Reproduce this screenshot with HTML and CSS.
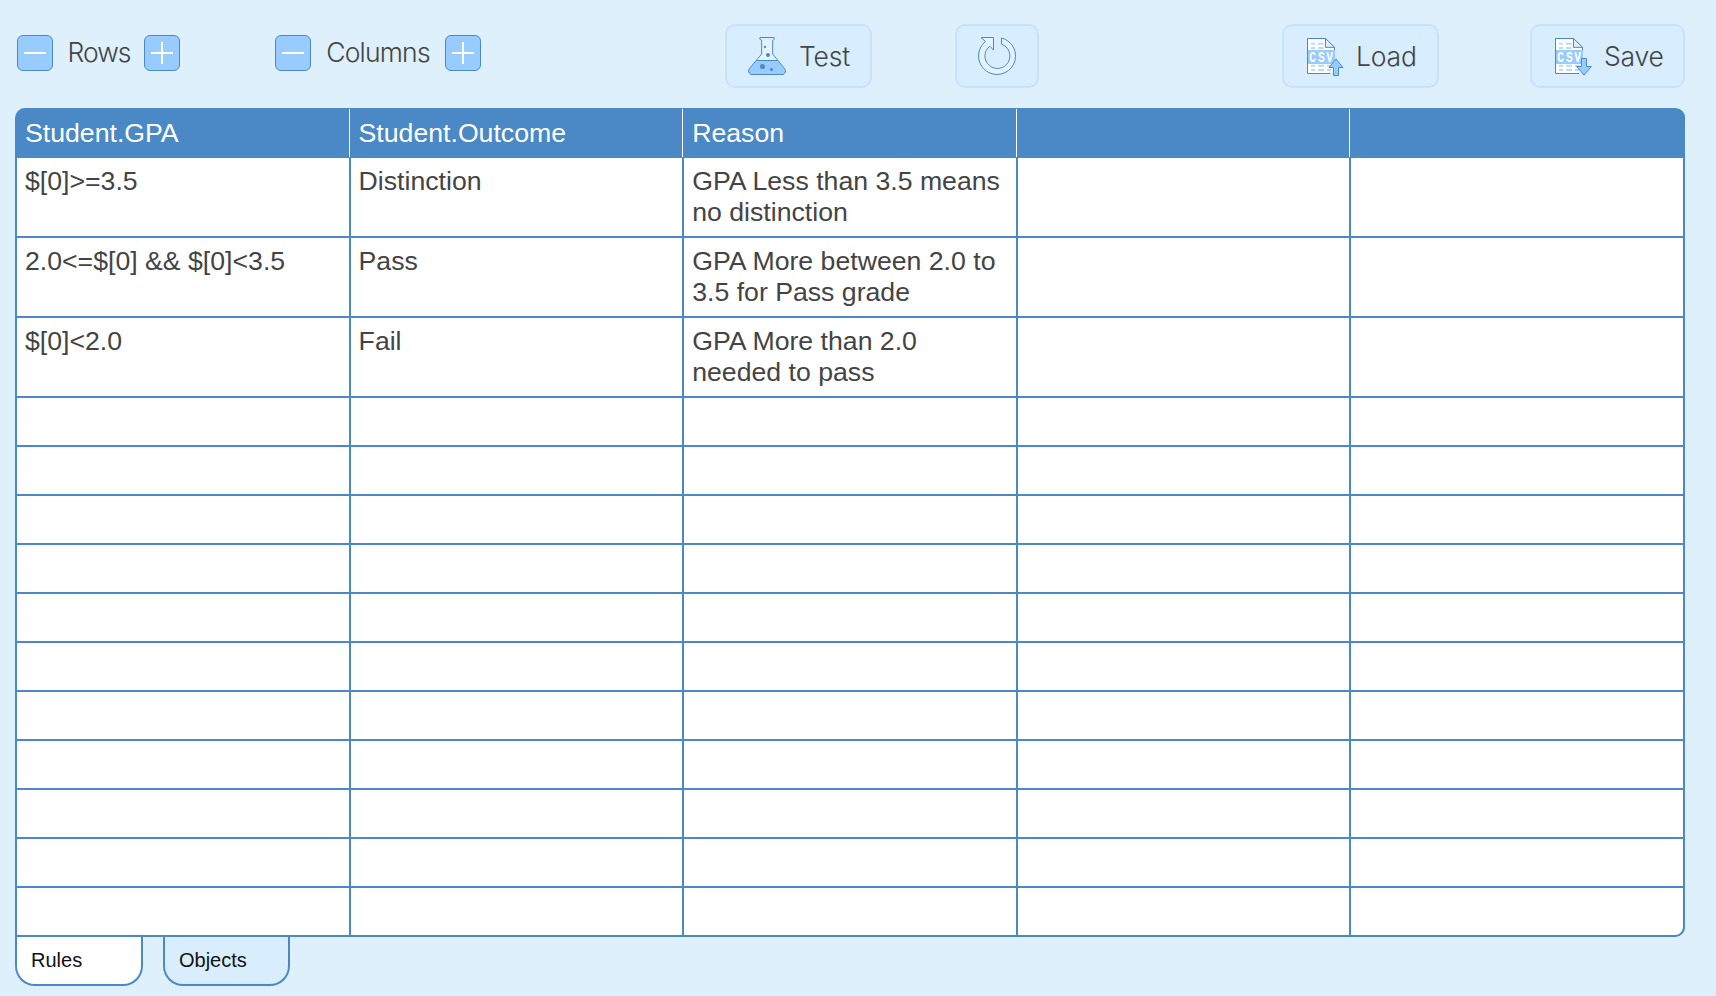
FILE: index.html
```html
<!DOCTYPE html>
<html lang="en">
<head>
<meta charset="utf-8">
<title>Decision Table</title>
<link rel="stylesheet" href="styles.css">
</head>
<body>
<svg class="defs" width="0" height="0">
  <defs>
    <g id="csv-doc">
      <path d="M112.500 85.500H166.500L193.500 112V190.500H112.500Z" fill="#fff" stroke="#4a89c6" stroke-width="3"/>
      <path d="M166.500 85.500V112H193.500Z" fill="#def0fc" stroke="#4a89c6" stroke-width="3"/>
      <path d="M123 101.500H135M144 101.500H161M123 114H135M144 114H161M123 167H135M144 167H162M171 167H184M123 180H135M144 180H162M171 180H184" stroke="#b9dbfb" stroke-width="6"/>
      <rect x="114" y="120" width="81" height="42" fill="#99ccfe"/>
      <text class="csv-text" transform="scale(.75 1)" x="157.300 192 225.300" y="156">CSV</text>
    </g>
  </defs>
</svg>
<main class="app">
  <div class="toolbar">
    <div class="stepper rows-stepper">
      <button class="step" aria-label="Remove row"><svg viewBox="0 0 36 36"><path d="M7 18H29"/></svg></button>
      <span class="label">Rows</span>
      <button class="step" aria-label="Add row"><svg viewBox="0 0 36 36"><path d="M7 18H29M18 7V29"/></svg></button>
    </div>
    <div class="stepper columns-stepper">
      <button class="step" aria-label="Remove column"><svg viewBox="0 0 36 36"><path d="M7 18H29"/></svg></button>
      <span class="label">Columns</span>
      <button class="step" aria-label="Add column"><svg viewBox="0 0 36 36"><path d="M7 18H29M18 7V29"/></svg></button>
    </div>
    <button class="action test">
      <svg class="icon" viewBox="111 78 120 120">
        <path d="M155 91V132L140 151H203L188 132V91Z" fill="#e4f3fe"/>
        <path d="M139 151H204L224 177Q230 186 221 193H121Q112 186 118 177Z" fill="#99ccfe"/>
        <path d="M150 82.500H192Q196 88 188 91.500V132L224 176Q231 187 219 193.500H123Q111 187 118 176L155 132V91.500Q146 88 150 82.500ZM139 151.500H203" class="outline"/>
        <g fill="#4a89c6"><circle cx="165" cy="111" r="3.500"/><circle cx="174" cy="135" r="6"/><circle cx="157.500" cy="169.500" r="7.500"/><circle cx="184.500" cy="178.500" r="4.800"/></g>
      </svg>
      <span class="label">Test</span>
    </button>
    <button class="action reset" aria-label="Reset">
      <svg class="icon" viewBox="111 78 120 120">
        <path d="M123 82.500H160.500V120L149 108.500A37.500 37.500 0 1 0 184.500 102.500V84A55.500 55.500 0 1 1 136.500 94.500Z" class="outline" fill="#e4f3fe"/>
      </svg>
    </button>
    <button class="action load">
      <svg class="icon" viewBox="102 78 120 120">
        <use href="#csv-doc"/>
        <path d="M181 187H190V201H181Z" fill="#d8eeff"/>
        <path d="M198 147L219 172.500H205.500V196.500H190.500V172.500H177Z" class="arrow"/>
      </svg>
      <span class="label">Load</span>
    </button>
    <button class="action save">
      <svg class="icon" viewBox="102 78 120 120">
        <use href="#csv-doc"/>
        <path d="M183 187H200V196H183Z" fill="#d8eeff"/>
        <path d="M198 195L220 169.500H205.500V145.500H190.500V169.500H176Z" class="arrow"/>
      </svg>
      <span class="label">Save</span>
    </button>
  </div>

  <div class="grid">
    <div class="row head"><div>Student.GPA</div><div>Student.Outcome</div><div>Reason</div><div></div><div></div></div>
    <div class="row tall"><div>$[0]&gt;=3.5</div><div>Distinction</div><div>GPA Less than 3.5 means no distinction</div><div></div><div></div></div>
    <div class="row tall"><div>2.0&lt;=$[0] &amp;&amp; $[0]&lt;3.5</div><div>Pass</div><div>GPA More between 2.0 to 3.5 for Pass grade</div><div></div><div></div></div>
    <div class="row tall"><div>$[0]&lt;2.0</div><div>Fail</div><div>GPA More than 2.0 needed to pass</div><div></div><div></div></div>
    <div class="row"><div></div><div></div><div></div><div></div><div></div></div>
    <div class="row"><div></div><div></div><div></div><div></div><div></div></div>
    <div class="row"><div></div><div></div><div></div><div></div><div></div></div>
    <div class="row"><div></div><div></div><div></div><div></div><div></div></div>
    <div class="row"><div></div><div></div><div></div><div></div><div></div></div>
    <div class="row"><div></div><div></div><div></div><div></div><div></div></div>
    <div class="row"><div></div><div></div><div></div><div></div><div></div></div>
    <div class="row"><div></div><div></div><div></div><div></div><div></div></div>
    <div class="row"><div></div><div></div><div></div><div></div><div></div></div>
    <div class="row"><div></div><div></div><div></div><div></div><div></div></div>
    <div class="row"><div></div><div></div><div></div><div></div><div></div></div>
  </div>

  <nav class="tabs">
    <a class="tab active">Rules</a>
    <a class="tab">Objects</a>
  </nav>
</main>
</body>
</html>
```
FILE: styles.css
```css
* { box-sizing: border-box; }

body {
  margin: 0;
  height: 996px;
  overflow: hidden;
  background: #def0fc;
  color: #444;
  font-family: "Liberation Sans", Arial, sans-serif;
}

button {
  padding: 0;
  font: inherit;
  color: inherit;
}

.defs { display: block; }

.app {
  width: 1670px;
  margin-left: 15px;
}

.toolbar {
  display: flex;
  align-items: flex-start;
  height: 108px;
  padding-top: 24px;
}

.stepper {
  display: flex;
  justify-content: space-between;
  align-items: center;
  height: 36px;
  margin-top: 11px;
}

.rows-stepper { width: 163px; margin-left: 2px; }
.columns-stepper { width: 206px; margin-left: 95px; }

.label {
  font: 300 26.5px/32px Inter, sans-serif;
  white-space: nowrap;
}

.stepper .label {
  padding-bottom: 2px;
  letter-spacing: -.8px;
}

.rows-stepper .label { padding-left: 1px; letter-spacing: -1px; }

.action .label { letter-spacing: -.2px; }

.step {
  width: 36px;
  height: 36px;
  border: 1px solid #4a89c6;
  border-radius: 6px;
  background: #99ccfe;
}

.step svg {
  display: block;
  width: 36px;
  height: 36px;
  margin: -1px;
  fill: none;
  stroke: #fff;
  stroke-width: 2;
}

.action {
  display: flex;
  align-items: center;
  gap: 12px;
  height: 64px;
  padding: 0 0 0 20px;
  border: 2px solid #c6e2ff;
  border-radius: 10px;
  background: #d8eeff;
}

.test { width: 147px; margin-left: 244px; }
.reset { width: 84px; margin-left: 83px; }
.load { width: 157px; margin-left: 243px; }
.save { width: 155px; margin-left: 91px; }

.icon {
  flex: none;
  width: 40px;
  height: 40px;
}

.outline { stroke: #4a89c6; stroke-width: 3; }
path.outline:not([fill]) { fill: none; }
.arrow { fill: #99ccfe; stroke: #4a89c6; stroke-width: 3; }

.csv-text {
  font: 700 45px "Liberation Mono", monospace;
  fill: #fff;
}

.grid {
  border-left: 2px solid #4a89c6;
  border-radius: 10px 10px 10px 0;
  background: #4a89c6;
  overflow: hidden;
}

.row {
  display: grid;
  grid-template-columns: repeat(5, 333.6px);
  height: 49px;
  font-size: 26.667px;
  line-height: 31px;
}

.row > div {
  padding: 7.5px 8px 0;
  border-right: 2px solid #4a89c6;
  border-bottom: 2px solid #4a89c6;
  background: #fff;
}

.tall { height: 80px; }
.row:last-child > div:last-child { border-bottom-right-radius: 10px; }

.head {
  height: 50px;
  padding-top: 1px;
  color: #fff;
}

.head > div {
  padding-top: 8.5px;
  background: #4a89c6;
  border-bottom-width: 1px;
}

.head > div:not(:last-child) { box-shadow: inset -1px 0 #fff; border-right-width: 1px; }

.tabs { display: flex; gap: 20px; }

.tab {
  width: 128px;
  height: 49px;
  padding: 12px 0 0 14px;
  border: 2px solid #4a89c6;
  border-top: 0;
  border-radius: 0 0 20px 20px;
  background: #d8eeff;
  color: #111;
  font-size: 20px;
  line-height: 23px;
}

.tab + .tab { width: 127px; }
.active { background: #fff; }
```
